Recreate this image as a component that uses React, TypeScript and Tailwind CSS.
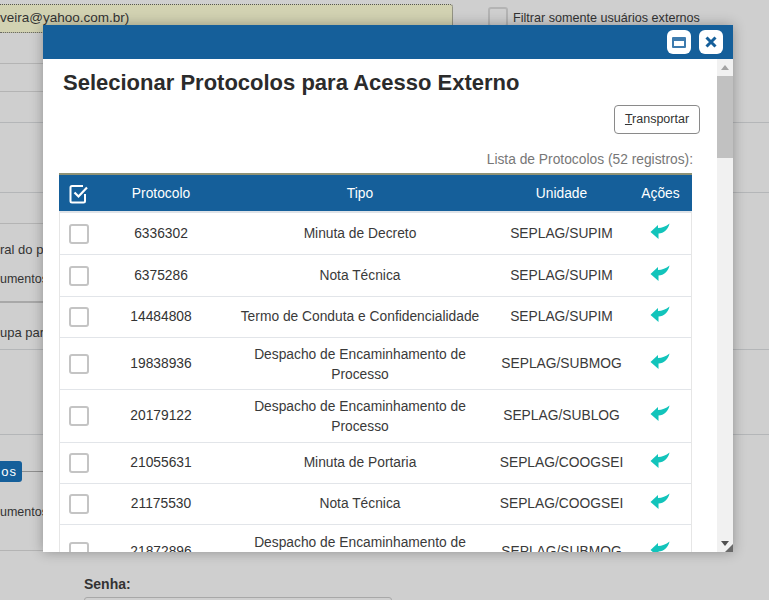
const rows = [
  { id: "6336302", tipo: ["Minuta de Decreto"], un: "SEPLAG/SUPIM", h: "h-[42px]" },
  { id: "6375286", tipo: ["Nota Técnica"], un: "SEPLAG/SUPIM", h: "h-[42px]" },
  { id: "14484808", tipo: ["Termo de Conduta e Confidencialidade"], un: "SEPLAG/SUPIM", h: "h-[41px]" },
  { id: "19838936", tipo: ["Despacho de Encaminhamento de", "Processo"], un: "SEPLAG/SUBMOG", h: "h-[52px]" },
  { id: "20179122", tipo: ["Despacho de Encaminhamento de", "Processo"], un: "SEPLAG/SUBLOG", h: "h-[53px]" },
  { id: "21055631", tipo: ["Minuta de Portaria"], un: "SEPLAG/COOGSEI", h: "h-[41px]" },
  { id: "21175530", tipo: ["Nota Técnica"], un: "SEPLAG/COOGSEI", h: "h-[41px]" },
  { id: "21872896", tipo: ["Despacho de Encaminhamento de", "Processo"], un: "SEPLAG/SUBMOG", h: "h-[54px]" },
];

function Arrow() {
  return (
    <svg width="20" height="17" viewBox="0 0 20 17" className="block">
      <path d="M0.5 9 L8 2 L8 5 C12 5 16 3.4 19.5 0.5 C18.5 6 14 10.3 8.5 10.6 L8.5 16 Z" fill="#12c4bb" />
    </svg>
  );
}

function Box() {
  return <div className="w-[20px] h-[20px] rounded-[3px] border-2 border-[#c4c4c4] bg-white" />;
}

function FullLine() {
  return <div className="h-px shrink-0 bg-[#b4b6b8]" />;
}

function ShortLine() {
  return <div className="h-px shrink-0 w-[60px] bg-[#b4b4b4]" />;
}

export default function App() {
  return (
    <div className="relative w-[769px] h-[600px] overflow-hidden bg-[#cfcfcf] text-[14px] text-[#2c2c2c] font-['Liberation_Sans',Arial,sans-serif]">
      {/* Page behind the dialog */}
      <div className="flex flex-col">
        <div className="flex h-[63px] pt-[4px]">
          <div className="w-[453px] h-[29px] rounded-r-[3px] border border-l-0 border-dotted border-[#555] bg-[#d2d2b2] flex items-center text-[13.5px] text-[#333] whitespace-nowrap overflow-hidden pl-0">
            veira@yahoo.com.br)
          </div>
          <div className="ml-[35px] mt-[3px] w-[20px] h-[20px] rounded-[3px] border-2 border-[#b4b4b4] bg-[#cfcfcf]" />
          <span className="ml-[5px] mt-[7px] text-[12.6px] leading-[15px] text-[#333] whitespace-nowrap">Filtrar somente usuários externos</span>
        </div>
        <ShortLine />
        <div className="h-[27px]" />
        <ShortLine />
        <div className="h-[30px]" />
        <FullLine />
        <div className="h-[69px]" />
        <FullLine />
        <div className="h-[30px]" />
        <ShortLine />
        <div className="mt-[16px] text-[13px] leading-[20px] text-[#333] whitespace-nowrap">ral do pr</div>
        <div className="mt-[9px] text-[12.5px] leading-[20px] text-[#333] whitespace-nowrap">umentos</div>
        <div className="h-[12px]" />
        <div className="h-[2px] w-[60px] bg-[#a8a8a8]" />
        <div className="mt-[20px] text-[13px] leading-[20px] text-[#333] whitespace-nowrap">upa par</div>
        <div className="h-[6px]" />
        <FullLine />
        <div className="h-[84px]" />
        <FullLine />
        <div className="h-[26px]" />
        <div className="flex items-center h-[21px]">
          <div className="w-[22px] h-[21px] bg-[#155f9a] rounded-r-[3px] text-white text-[13px] tracking-[1px] flex items-center justify-end pr-[5px]">os</div>
          <div className="w-[38px] h-px bg-[#8f8f8f]" />
        </div>
        <div className="mt-[20px] text-[12.5px] leading-[20px] text-[#333] whitespace-nowrap">umentos</div>
        <div className="h-[28px]" />
        <ShortLine />
        <div className="pl-[84px] pt-[25px] text-[14px] leading-[16px] font-bold text-[#333]">Senha:</div>
        <div className="ml-[84px] mt-[5px] w-[308px] h-[30px] rounded-[3px] border border-[#a8a8a8]" />
      </div>

      {/* Dialog */}
      <div className="absolute left-[43px] top-[25px] w-[690px] h-[527px] flex flex-col bg-white shadow-[0_0_12px_rgba(0,0,0,0.3)]">
        <div className="h-[34px] shrink-0 bg-[#155f9a] flex items-center justify-end gap-[8px] pr-[10px]">
          <button className="w-[24px] h-[24px] rounded-[6px] bg-white flex items-center justify-center">
            <span className="block w-[14px] h-[11px] border-2 border-t-[4px] rounded-[1px] border-[#3d7bae]" />
          </button>
          <button className="w-[24px] h-[24px] rounded-[6px] bg-white flex items-center justify-center">
            <svg width="12" height="12" viewBox="0 0 12 12">
              <path d="M1.5 1.5 L10.5 10.5 M10.5 1.5 L1.5 10.5" stroke="#155f9a" strokeWidth="3" />
            </svg>
          </button>
        </div>

        <div className="flex-1 flex min-h-0">
          <div className="flex-1 min-w-0 overflow-hidden pl-[16px] pr-[25px]">
            <h1 className="pt-[12px] pl-[4px] text-[22px] leading-[24px] font-bold text-[#2b2b2b] whitespace-nowrap">
              Selecionar Protocolos para Acesso Externo
            </h1>
            <div className="flex justify-end mt-[10px] mr-[-8px]">
              <button className="w-[86px] h-[29px] rounded-[4px] border border-[#8a8a8a] bg-white text-[12.5px] text-[#333]">
                <span className="underline">T</span>ransportar
              </button>
            </div>
            <div className="mt-[17px] h-[18px] mr-[-1px] text-right text-[13.8px] leading-[18px] text-[#777] whitespace-nowrap">
              Lista de Protocolos (52 registros):
            </div>
            <div className="mt-[4px] border-t-2 border-[#8f9275] text-[13.8px]">
              <div className="flex h-[36px] pt-[2px] bg-[#155f9a] text-white items-center text-center">
                <div className="w-[42px] flex justify-center pr-[3px]">
                  <svg width="20" height="20" viewBox="0 0 20 20" fill="none" stroke="white" strokeWidth="2">
                    <path d="M16 10 V17 Q16 18.5 14.5 18.5 H3 Q1.5 18.5 1.5 17 V3.5 Q1.5 2 3 2 H14" />
                    <path d="M5.5 8.5 L9.5 12.5 L18 3.5" strokeWidth="2.2" />
                  </svg>
                </div>
                <div className="w-[120px]">Protocolo</div>
                <div className="w-[278px]">Tipo</div>
                <div className="w-[125px]">Unidade</div>
                <div className="flex-1 ml-[5px]">Ações</div>
              </div>
              <div className="h-[400px] border-x border-[#e6e6e6] border-t-2 border-t-[#dfe3e8]">
                {rows.map((r) => (
                  <div key={r.id} className={`flex items-center text-center border-b border-[#e2e5e9] leading-[20px] text-[#3a3a3a] ${r.h}`}>
                    <div className="w-[41px] flex justify-center pr-[3px]"><Box /></div>
                    <div className="w-[120px] text-[#333]">{r.id}</div>
                    <div className={`w-[278px] whitespace-nowrap ${r.tipo.length > 1 ? "pt-[2px]" : ""}`}>
                      {r.tipo.map((t) => <div key={t}>{t}</div>)}
                    </div>
                    <div className="w-[125px] whitespace-nowrap">{r.un}</div>
                    <div className="flex-1 ml-[5px] flex justify-center pb-[5px]"><Arrow /></div>
                  </div>
                ))}
              </div>
            </div>
          </div>

          <div className="w-[16px] shrink-0 bg-[#f1f1f1] flex flex-col items-center relative">
            <div className="h-[17px] flex items-center justify-center">
              <div className="w-0 h-0 border-x-[4px] border-x-transparent border-b-[5px] border-b-[#a3a3a3]" />
            </div>
            <div className="w-full h-[82px] bg-[#c1c1c1]" />
            <div className="flex-1" />
            <div className="h-[17px] flex items-center justify-center">
              <div className="w-0 h-0 border-x-[4px] border-x-transparent border-t-[5px] border-t-[#505050]" />
            </div>
            <div className="absolute right-0 bottom-0 w-0 h-0 border-l-[8px] border-l-transparent border-b-[8px] border-b-[#6a6a6a]" />
          </div>
        </div>
      </div>
    </div>
  );
}
